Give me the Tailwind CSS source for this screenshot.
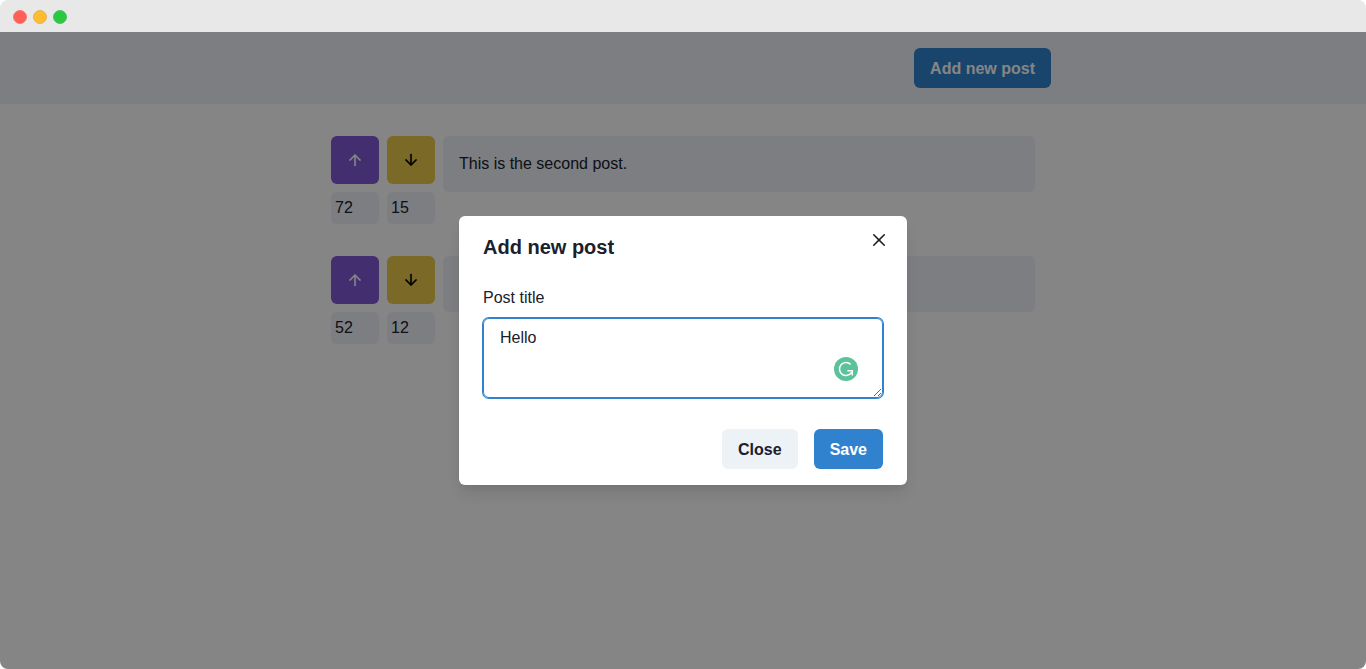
<!DOCTYPE html>
<html lang="en">
<head>
<meta charset="utf-8">
<meta name="viewport" content="width=device-width, initial-scale=1">
<title>Posts</title>
<script src="https://cdn.jsdelivr.net/npm/@tailwindcss/browser@4"></script>
</head>
<body class="bg-white font-['Liberation_Sans',Arial,sans-serif] text-base text-[#1a202c]">
<svg class="hidden" aria-hidden="true">
  <symbol id="up" viewBox="0 0 24 24"><path fill="currentColor" stroke="currentColor" stroke-width=".3" d="M4 12l1.41 1.41L11 7.83V20h2V7.83l5.58 5.59L20 12l-8-8-8 8z"/></symbol>
  <symbol id="down" viewBox="0 0 24 24"><path fill="currentColor" stroke="currentColor" stroke-width=".3" d="M20 12l-1.41-1.41L13 16.17V4h-2v12.17l-5.58-5.59L4 12l8 8 8-8z"/></symbol>
</svg>
<div class="flex min-h-screen flex-col overflow-hidden rounded-lg">
  <div class="flex h-8 shrink-0 items-center gap-1.5 bg-[#e8e8e8] px-[13px] pt-0.5">
    <span class="size-3.5 rounded-full border border-[#f27972] bg-[#ff5f57]"></span>
    <span class="size-3.5 rounded-full border border-[#e5b25c] bg-[#ffbd2e]"></span>
    <span class="size-3.5 rounded-full border border-[#4fc064] bg-[#28c940]"></span>
  </div>

  <div class="relative grow bg-white">
    <header class="bg-[#edf2f7]">
      <div class="mx-auto flex max-w-3xl justify-end p-4">
        <button type="button" class="h-10 rounded-md bg-[#3182ce] px-4 pt-0.5 leading-5 font-bold text-white">Add new post</button>
      </div>
    </header>

    <main class="mx-auto flex max-w-3xl flex-col gap-8 p-8">
      <article class="flex items-start gap-2">
        <div class="flex flex-col gap-2">
          <button type="button" aria-label="Upvote" class="flex size-12 items-center justify-center rounded-md bg-[#805ad5] text-white"><svg class="size-[18px]"><use href="#up"/></svg></button>
          <div class="h-8 rounded-md bg-[#edf2f7] p-1 leading-6">72</div>
        </div>
        <div class="flex flex-col gap-2">
          <button type="button" aria-label="Downvote" class="flex size-12 items-center justify-center rounded-md bg-[#ecc94b] text-black"><svg class="size-[18px]"><use href="#down"/></svg></button>
          <div class="h-8 rounded-md bg-[#edf2f7] p-1 leading-6">15</div>
        </div>
        <p class="min-h-14 grow rounded-md bg-[#edf2f7] p-4">This is the second post.</p>
      </article>
      <article class="flex items-start gap-2">
        <div class="flex flex-col gap-2">
          <button type="button" aria-label="Upvote" class="flex size-12 items-center justify-center rounded-md bg-[#805ad5] text-white"><svg class="size-[18px]"><use href="#up"/></svg></button>
          <div class="h-8 rounded-md bg-[#edf2f7] p-1 leading-6">52</div>
        </div>
        <div class="flex flex-col gap-2">
          <button type="button" aria-label="Downvote" class="flex size-12 items-center justify-center rounded-md bg-[#ecc94b] text-black"><svg class="size-[18px]"><use href="#down"/></svg></button>
          <div class="h-8 rounded-md bg-[#edf2f7] p-1 leading-6">12</div>
        </div>
        <p class="min-h-14 grow rounded-md bg-[#edf2f7] p-4"></p>
      </article>
    </main>

    <div class="absolute inset-0 flex items-start justify-center bg-black/48 pt-46">
      <section role="dialog" aria-modal="true" aria-labelledby="dialog-title" class="relative w-full max-w-md rounded-md bg-white shadow-[0_10px_15px_-3px_rgba(0,0,0,0.1),0_4px_6px_-2px_rgba(0,0,0,0.05)]">
        <h2 id="dialog-title" class="px-6 py-4 text-xl leading-[30px] font-bold">Add new post</h2>
        <button type="button" aria-label="Close dialog" class="absolute top-2 right-3 flex size-8 items-center justify-center rounded-md">
          <svg class="size-3" viewBox="0 0 24 24"><path fill="currentColor" d="M.439,21.44a1.5,1.5,0,0,0,2.122,2.121L11.823,14.3a.25.25,0,0,1,.354,0l9.262,9.263a1.5,1.5,0,1,0,2.122-2.121L14.3,12.177a.25.25,0,0,1,0-.354l9.263-9.262A1.5,1.5,0,0,0,21.439.44L12.177,9.7a.25.25,0,0,1-.354,0L2.561.44A1.5,1.5,0,0,0,.439,2.561L9.7,11.823a.25.25,0,0,1,0,.354Z"/></svg>
        </button>
        <div class="px-6 pt-2 pb-[15px]">
          <label for="post-title" class="mb-2 block">Post title</label>
          <div class="relative">
            <textarea id="post-title" class="block h-20 w-full resize-y rounded-md border border-[#3182ce] px-4 py-2 leading-[22px] shadow-[0_0_0_1px_#3182ce] outline-none">Hello</textarea>
            <svg class="absolute right-[25px] bottom-[17px] size-6" viewBox="0 0 24 24" fill="none" aria-hidden="true">
              <circle cx="12" cy="12" r="12" fill="#5bc29b"/>
              <path d="M16.6 7.4A6.5 6.5 0 1 0 17.6 15.3M13.4 13.7H18.3V18.6" stroke="#fff" stroke-width="1.5"/>
            </svg>
          </div>
        </div>
        <footer class="flex justify-end gap-4 px-6 py-4">
          <button type="button" class="h-10 rounded-md bg-[#edf2f7] px-4 pt-0.5 leading-5 font-bold">Close</button>
          <button type="button" class="h-10 rounded-md bg-[#3182ce] px-4 pt-0.5 leading-5 font-bold text-white">Save</button>
        </footer>
      </section>
    </div>
  </div>
</div>
</body>
</html>
